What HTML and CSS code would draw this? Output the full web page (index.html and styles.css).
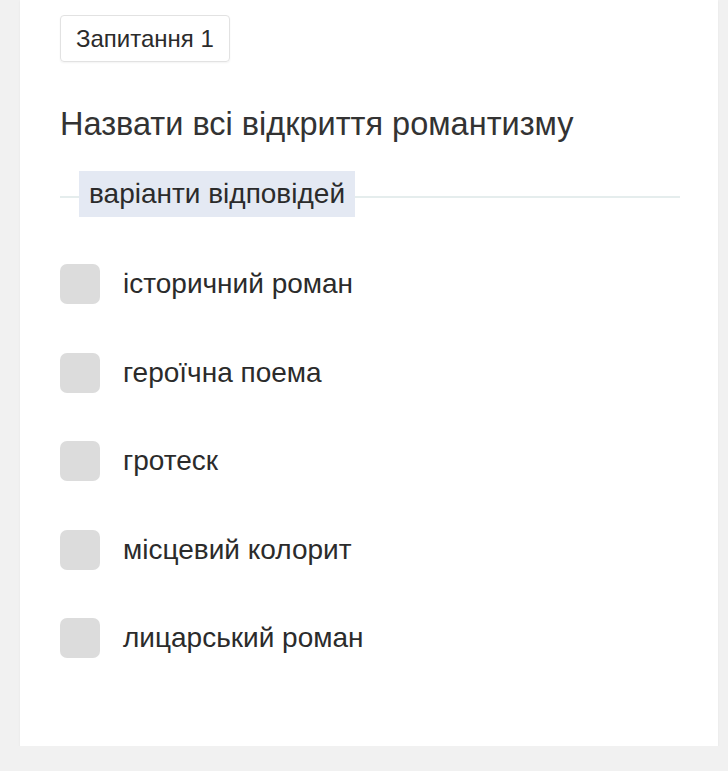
FILE: index.html
```html
<!DOCTYPE html>
<html lang="uk">
<head>
  <meta charset="UTF-8">
  <meta name="viewport" content="width=device-width, initial-scale=1.0">
  <title>Запитання 1</title>
  <link rel="stylesheet" href="styles.css">
</head>
<body>
  <div class="card">
    <span class="badge">Запитання 1</span>
    <h1 class="question">Назвати всі відкриття романтизму</h1>
    <div class="legend">
      <span class="legend-label">варіанти відповідей</span>
    </div>
    <ul class="options">
      <li class="option"><span class="box"></span>історичний роман</li>
      <li class="option"><span class="box"></span>героїчна поема</li>
      <li class="option"><span class="box"></span>гротеск</li>
      <li class="option"><span class="box"></span>місцевий колорит</li>
      <li class="option"><span class="box"></span>лицарський роман</li>
    </ul>
  </div>
</body>
</html>
```

FILE: styles.css
```css
/* Global */
body {
  margin: 0;
  padding: 0;
  background: #f1f1f1;
  font-family: "Liberation Sans", Arial, sans-serif;
  color: #2b2b2b;
}
.card {
  width: 620px;
  margin-left: 20px;
  padding: 15px 38px 88px 40px;
  background: #fff;
  box-shadow: 0 1px 2px rgba(0,0,0,0.06);
}
.badge {
  display: inline-block;
  padding: 0 15px;
  height: 45px;
  line-height: 45px;
  border: 1px solid #e2e2e2;
  border-radius: 4px;
  font-size: 24px;
  color: #2b2b2b;
  box-shadow: 0 1px 2px rgba(0,0,0,0.05);
}
.question {
  margin: 42px 0 0;
  font-size: 32.5px;
  font-weight: 400;
  line-height: 40px;
  color: #333;
}
/* answers legend */
.legend {
  margin-top: 27px;
  display: flex;
  align-items: center;
  height: 46px;
  padding-left: 19px;
  background: linear-gradient(#e5eded, #e5eded) 0 25px / 100% 2px no-repeat;
}
.legend-label {
  background: #e4e9f3;
  padding: 0 10px;
  line-height: 46px;
  font-size: 28px;
  color: #2b2b2b;
}
.options {
  list-style: none;
  margin: 47px 0 0;
  padding: 0;
  display: flex;
  flex-direction: column;
  gap: 48.5px;
}
.option {
  display: flex;
  align-items: center;
  gap: 23px;
  height: 40px;
  font-size: 28px;
  color: #2b2b2b;
}
.box {
  width: 40px;
  height: 40px;
  border-radius: 7px;
  background: #dcdcdc;
  flex-shrink: 0;
}
```
